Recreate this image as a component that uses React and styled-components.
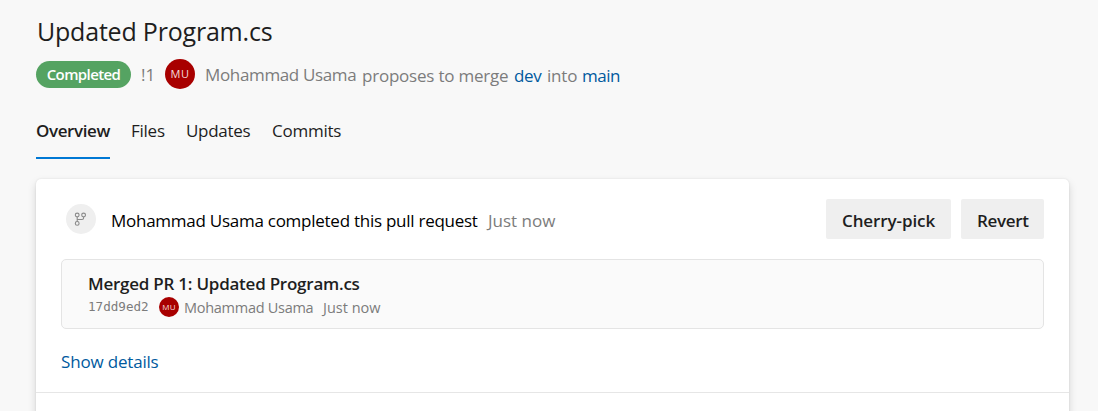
import React from "react";
import styled, { createGlobalStyle } from "styled-components";

const GlobalStyle = createGlobalStyle`
  * { box-sizing: border-box; }
  html, body { margin: 0; background: #f8f8f8; }
  body { height: 411px; overflow: hidden; font-family: "Open Sans", "Noto Sans", sans-serif; }
`;

const Page = styled.div`
  height: 411px;
  padding: 0 29px 0 36px;
  overflow: hidden;
  background: #f8f8f8;
  color: #1e1e1e;
`;

const Text = styled.span`
  display: block;
  flex: none;
  width: ${(p) => p.$w}px;
  padding-top: ${(p) => p.$drop || 0}px;
  font-size: ${(p) => p.$size || 17}px;
  font-weight: ${(p) => p.$weight || 400};
  letter-spacing: ${(p) => p.$track || 0}px;
  line-height: 24px;
  white-space: nowrap;
  color: ${(p) => p.$color || "inherit"};
`;

const Title = styled.h1`
  margin: 0;
  padding: 15px 0 0 1px;
  height: 59px;
  font-size: 25px;
  font-weight: 400;
  line-height: 32px;
  letter-spacing: -0.2px;
  white-space: nowrap;
`;

const Summary = styled.div`
  display: flex;
  align-items: center;
  height: 30px;
`;

const Status = styled.span`
  width: 95px;
  height: 27px;
  margin-right: 10px;
  border-radius: 14px;
  background: #55a362;
  color: #fff;
  font-size: 15px;
  font-weight: 600;
  letter-spacing: -0.6px;
  line-height: 26px;
  text-align: center;
`;

const Avatar = styled.span`
  flex: none;
  width: ${(p) => p.$size}px;
  height: ${(p) => p.$size}px;
  border-radius: 50%;
  background: #a80000;
  color: #f3dcdc;
  font-size: ${(p) => (p.$size > 20 ? 11 : 8)}px;
  line-height: ${(p) => p.$size}px;
  letter-spacing: ${(p) => (p.$size > 20 ? 0.5 : 0.2)}px;
  text-align: center;
`;

const Tabs = styled.nav`
  display: flex;
  gap: 21px;
  height: 90px;
  padding-top: 24px;
`;

const Tab = styled.a`
  height: 46px;
  padding-top: 6px;
  border-bottom: 2px solid ${(p) => (p.$active ? "#0078d4" : "transparent")};
`;

const Card = styled.main`
  height: 260px;
  border-radius: 5px;
  background: #fff;
  box-shadow: 0 4px 9px rgba(0, 0, 0, 0.15), 0 0 2px rgba(0, 0, 0, 0.1);
`;

const CardBody = styled.section`
  height: 214px;
  padding: 20px 25px 0;
  border-bottom: 1px solid #e6e6e6;
`;

const Activity = styled.div`
  display: flex;
  align-items: center;
  height: 40px;
  padding-left: 5px;
`;

const BranchBadge = styled.span`
  display: flex;
  align-items: center;
  justify-content: center;
  width: 30px;
  height: 30px;
  margin-right: 15px;
  border-radius: 50%;
  background: #efefef;
`;

const Actions = styled.div`
  display: flex;
  gap: 10px;
  margin-left: auto;
`;

const Button = styled.button`
  display: flex;
  align-items: center;
  height: 40px;
  padding: 3px 16px 0;
  border: 0;
  border-radius: 2px;
  background: #efefef;
  color: #1e1e1e;
  font-family: inherit;
  text-align: left;
`;

const Commit = styled.article`
  height: 70px;
  margin-top: 20px;
  padding: 12px 26px 0;
  border: 1px solid #e4e4e4;
  border-radius: 5px;
  background: #fafafa;
`;

const CommitMeta = styled.div`
  display: flex;
  align-items: center;
  height: 22px;
`;

const Hash = styled(Text)`
  font-family: "DejaVu Sans Mono", monospace;
`;

const Details = styled.a`
  display: block;
  margin-top: 21px;
`;

const Gap = styled.span`
  flex: none;
  width: ${(p) => p.$w}px;
`;

function BranchIcon() {
  return (
    <svg width="14" height="16" viewBox="0 0 14 16" fill="none" stroke="#8a8a8a" strokeWidth="1.1">
      <circle cx="3.2" cy="4" r="1.9" />
      <circle cx="9.6" cy="4" r="1.9" />
      <circle cx="3.2" cy="12.4" r="1.9" />
      <path d="M3.2 5.9v4.6M9.6 5.9v1q0 1.6-1.6 1.6H3.2" />
    </svg>
  );
}

export default function App() {
  return (
    <Page>
      <GlobalStyle />
      <Title>Updated Program.cs</Title>
      <Summary>
        <Status>Completed</Status>
        <Text $w={24} $drop={2} $color="#7c7c7c">!1</Text>
        <Avatar $size={30}>MU</Avatar>
        <Gap $w={10} />
        <Text $w={157} $drop={2} $track={-0.35} $color="#7c7c7c">Mohammad Usama</Text>
        <Text $w={152} $drop={4} $track={-0.22} $color="#7c7c7c">proposes to merge</Text>
        <Text $w={33} $drop={4} $track={-0.35} $color="#005a9e">dev</Text>
        <Text $w={35} $drop={4} $track={-0.2} $color="#7c7c7c">into</Text>
        <Text $w={40} $drop={4} $track={-0.5} $color="#005a9e">main</Text>
      </Summary>
      <Tabs>
        <Tab $active><Text $w={74} $weight={600} $track={-0.4}>Overview</Text></Tab>
        <Tab><Text $w={34} $track={-0.25}>Files</Text></Tab>
        <Tab><Text $w={65} $track={-0.3}>Updates</Text></Tab>
        <Tab><Text $w={70} $track={-0.25}>Commits</Text></Tab>
      </Tabs>
      <Card>
        <CardBody>
          <Activity>
            <BranchBadge><BranchIcon /></BranchBadge>
            <Text $w={377} $drop={3} $track={-0.26} $color="#000">Mohammad Usama completed this pull request</Text>
            <Text $w={70} $drop={3} $color="#7c7c7c">Just now</Text>
            <Actions>
              <Button><Text $w={93} $weight={600} $track={-0.1}>Cherry-pick</Text></Button>
              <Button><Text $w={51} $weight={600} $track={-0.3}>Revert</Text></Button>
            </Actions>
          </Activity>
          <Commit>
            <Text $w={272} $weight={600} $track={-0.24}>Merged PR 1: Updated Program.cs</Text>
            <CommitMeta>
              <Hash $w={71} $size={12.6} $color="#7c7c7c">17dd9ed2</Hash>
              <Avatar $size={20}>MU</Avatar>
              <Gap $w={5} />
              <Text $w={139} $drop={1} $size={14.5} $track={-0.28} $color="#7c7c7c">Mohammad Usama</Text>
              <Text $w={60} $drop={1} $size={14.5} $color="#7c7c7c">Just now</Text>
            </CommitMeta>
          </Commit>
          <Details><Text $w={98} $track={-0.18} $color="#005a9e">Show details</Text></Details>
        </CardBody>
      </Card>
    </Page>
  );
}
